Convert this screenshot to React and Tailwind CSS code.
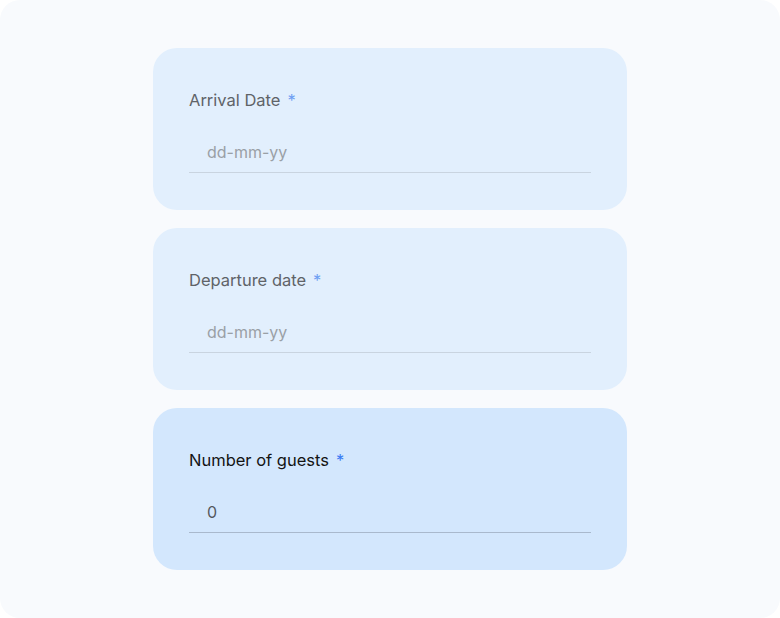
export default function App() {
  const fields = [
    { label: "Arrival Date", value: "", placeholder: "dd-mm-yy", active: false },
    { label: "Departure date", value: "", placeholder: "dd-mm-yy", active: false },
    { label: "Number of guests", value: "0", placeholder: "", active: true },
  ];
  return (
    <div className="w-[780px] h-[618px] bg-white" style={{ fontFamily: "Inter, 'Noto Sans', sans-serif" }}>
      <div className="w-full h-full rounded-[20px] bg-[#f8fafd] flex flex-col items-center py-[48px] gap-[18px]">
        {fields.map((f) => (
          <div
            key={f.label}
            className={
              "w-[474px] h-[162px] rounded-[24px] px-[36px] pt-[40px] flex flex-col " +
              (f.active ? "bg-[#d3e7fd]" : "bg-[#e2effd]")
            }
          >
            <div
              className={
                "text-[16.5px] leading-[24px] flex items-center " +
                (f.active ? "text-[#141414]" : "text-[#5f6368]")
              }
            >
              <span>{f.label}</span>
              <span className={"ml-[7px] " + (f.active ? "text-[#3b7cf4]" : "text-[#6f9ff3]")}>*</span>
            </div>
            <div
              className={
                "mt-[20px] h-[41px] pl-[18px] flex items-center border-b " +
                (f.active ? "border-[#a9b9cd]" : "border-[#c9d4e0]")
              }
            >
              <span
                className={
                  "text-[16px] leading-[24px] " +
                  (f.value ? "text-[#55595e]" : "text-[#9aa0a6]")
                }
              >
                {f.value || f.placeholder}
              </span>
            </div>
          </div>
        ))}
      </div>
    </div>
  );
}
